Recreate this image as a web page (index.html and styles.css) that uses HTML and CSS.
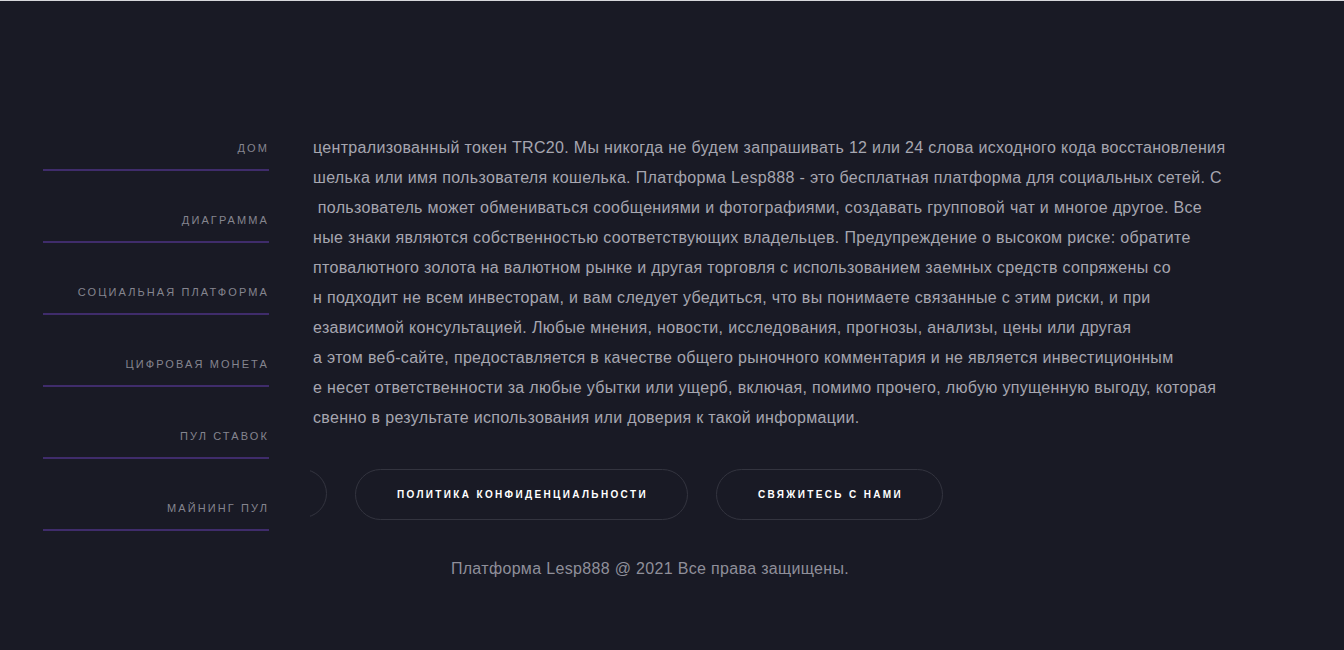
FILE: index.html
```html
<!DOCTYPE html>
<html lang="ru">
<head>
  <meta charset="UTF-8">
  <title>Lesp888</title>
  <link rel="stylesheet" href="styles.css">
</head>
<body>

  <div class="page">
    <div class="content">
      <p class="about">
        <span>централизованный токен TRC20. Мы никогда не будем запрашивать 12 или 24 слова исходного кода восстановления</span>
        <span>шелька или имя пользователя кошелька. Платформа Lesp888 - это бесплатная платформа для социальных сетей. С</span>
        <span>&nbsp;пользователь может обмениваться сообщениями и фотографиями, создавать групповой чат и многое другое. Все</span>
        <span>ные знаки являются собственностью соответствующих владельцев. Предупреждение о высоком риске: обратите</span>
        <span>птовалютного золота на валютном рынке и другая торговля с использованием заемных средств сопряжены со</span>
        <span>н подходит не всем инвесторам, и вам следует убедиться, что вы понимаете связанные с этим риски, и при</span>
        <span>езависимой консультацией. Любые мнения, новости, исследования, прогнозы, анализы, цены или другая</span>
        <span>а этом веб-сайте, предоставляется в качестве общего рыночного комментария и не является инвестиционным</span>
        <span>е несет ответственности за любые убытки или ущерб, включая, помимо прочего, любую упущенную выгоду, которая</span>
        <span>свенно в результате использования или доверия к такой информации.</span>
      </p>

      <div class="actions">
        <a class="btn btn-terms" href="#">Условия использования</a>
        <a class="btn" href="#">Политика конфиденциальности</a>
        <a class="btn" href="#">Свяжитесь с нами</a>
      </div>
    </div>

    <p class="copy">Платформа Lesp888 @ 2021 Все права защищены.</p>
  </div>

  <!-- боковое меню поверх контента -->
  <aside class="side">
    <nav class="menu">
      <a href="#">Дом</a>
      <a href="#">Диаграмма</a>
      <a href="#">Социальная платформа</a>
      <a href="#">Цифровая монета</a>
      <a href="#">Пул ставок</a>
      <a href="#">Майнинг пул</a>
    </nav>
  </aside>

</body>
</html>
```

FILE: styles.css
```css
body {
  margin: 0;
  min-height: 649px;
  background: #191a25;
  border-top: 1px solid #d6d7db;
  font-family: 'Liberation Sans', Arial, sans-serif;
  color: #a6a6b0;
  position: relative;
  overflow: hidden;
}

.page {
  width: 1300px;
  padding-top: 132px;
}

.content {
  padding-left: 313px;
}

.about {
  margin: 0;
  font-size: 16px;
  line-height: 30px;
  letter-spacing: 0.33px;
  white-space: nowrap;
}

.about span {
  display: block;
}

.actions {
  display: flex;
  gap: 28px;
  margin-top: 36px;
  margin-left: -266px;
}

.btn {
  display: flex;
  align-items: center;
  justify-content: center;
  height: 49px;
  padding: 0 39px 0 41px;
  border: 1px solid #33343f;
  border-radius: 26px;
  color: #ffffff;
  font-size: 10px;
  font-weight: bold;
  letter-spacing: 2.35px;
  text-transform: uppercase;
  text-decoration: none;
  white-space: nowrap;
}

.btn-terms {
  width: 280px;
  padding: 0;
  box-sizing: border-box;
}

.copy {
  margin: 37px 0 0;
  text-align: center;
  font-size: 16px;
  line-height: 24px;
  letter-spacing: 0.33px;
  color: #8f8f9a;
}

.side {
  position: absolute;
  top: 0;
  left: 0;
  width: 310px;
  height: 100%;
  background: #191a25;
}

.menu {
  display: flex;
  flex-direction: column;
  width: 226px;
  margin: 98px 0 0 43px;
}

.menu a {
  padding: 41px 0 13px;
  border-bottom: 2px solid #3f2c6b;
  text-align: right;
  font-size: 11px;
  line-height: 16px;
  letter-spacing: 2.1px;
  text-transform: uppercase;
  text-decoration: none;
  color: #85858f;
}
```
